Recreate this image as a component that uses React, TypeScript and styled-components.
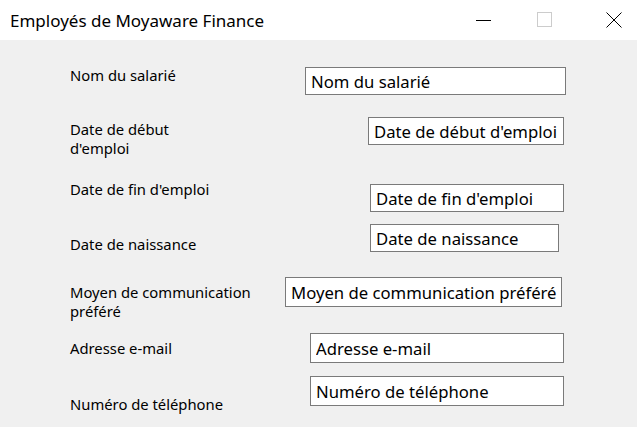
import React from "react";
import styled, { createGlobalStyle } from "styled-components";

const Global = createGlobalStyle`
  html, body { margin: 0; padding: 0; background: #f0f0f0; }
  body { font-family: "Noto Sans", "Open Sans", sans-serif; color: #000; }
`;

const Window = styled.div`
  width: 637px;
  height: 427px;
  display: flex;
  flex-direction: column;
  background: #f0f0f0;
  overflow: hidden;
`;

const TitleBar = styled.div`
  height: 40px;
  flex: none;
  background: #ffffff;
  display: flex;
  align-items: center;
  padding: 0 15px 0 10px;
`;

const Title = styled.div`
  flex: 1;
  font-size: 17px;
  color: #000;
  white-space: nowrap;
`;

const Controls = styled.div`
  display: flex;
  align-items: center;
  height: 100%;
`;

const ControlIcon = styled.svg<{ $gap: number }>`
  display: block;
  margin-left: ${(p) => p.$gap}px;
  width: 16px;
  height: 16px;
`;

const Form = styled.div`
  flex: 1;
  padding: 26px 0 0 70px;
  display: flex;
  flex-direction: column;
`;

const Row = styled.div<{ $h: number }>`
  height: ${(p) => p.$h}px;
  flex: none;
  display: grid;
  grid-template-columns: 215px 1fr;
  align-items: start;
`;

const Label = styled.div<{ $top: number; $max: number }>`
  margin-top: ${(p) => p.$top}px;
  max-width: ${(p) => p.$max}px;
  font-size: 14.8px;
  line-height: 19px;
  color: #000;
`;

const TextBox = styled.input<{ $left: number; $top: number; $w: number; $hh: number }>`
  margin: ${(p) => p.$top}px 0 0 ${(p) => p.$left}px;
  width: ${(p) => p.$w}px;
  height: ${(p) => p.$hh}px;
  box-sizing: border-box;
  border: 1px solid #7a7a7a;
  background: #ffffff;
  padding: 0 0 0 5px;
  font-family: "Noto Sans", "Open Sans", sans-serif;
  font-size: 16.7px;
  color: #000;
  outline: none;
`;

type Field = {
  label: string;
  h: number;
  lTop: number;
  lMax: number;
  bLeft: number;
  bTop: number;
  bW: number;
  bH: number;
};

const fields: Field[] = [
  { label: "Nom du salarié", h: 51, lTop: 0, lMax: 200, bLeft: 20, bTop: 1, bW: 261, bH: 28 },
  { label: "Date de début d'emploi", h: 63, lTop: 3, lMax: 125, bLeft: 83, bTop: 0, bW: 196, bH: 28 },
  { label: "Date de fin d'emploi", h: 44, lTop: 0, lMax: 200, bLeft: 85, bTop: 4, bW: 194, bH: 28 },
  { label: "Date de naissance", h: 53, lTop: 11, lMax: 200, bLeft: 85, bTop: 0, bW: 189, bH: 28 },
  { label: "Moyen de communication préféré", h: 56, lTop: 6, lMax: 190, bLeft: 0, bTop: 0, bW: 277, bH: 30 },
  { label: "Adresse e-mail", h: 43, lTop: 6, lMax: 200, bLeft: 25, bTop: 0, bW: 254, bH: 30 },
  { label: "Numéro de téléphone", h: 50, lTop: 19, lMax: 200, bLeft: 25, bTop: 0, bW: 254, bH: 30 },
];

export default function App() {
  return (
    <Window>
      <Global />
      <TitleBar>
        <Title>Employés de Moyaware Finance</Title>
        <Controls>
          <ControlIcon $gap={0} viewBox="0 0 16 16">
            <line x1="0" y1="8.5" x2="15" y2="8.5" stroke="#000" strokeWidth="1" />
          </ControlIcon>
          <ControlIcon $gap={45} viewBox="0 0 16 16">
            <rect x="0.5" y="0.5" width="14" height="14" fill="none" stroke="#cccccc" strokeWidth="1" />
          </ControlIcon>
          <ControlIcon $gap={53} viewBox="0 0 16 16">
            <path d="M0.5 0.5 L15.5 15.5 M15.5 0.5 L0.5 15.5" stroke="#000" strokeWidth="1" fill="none" />
          </ControlIcon>
        </Controls>
      </TitleBar>
      <Form>
        {fields.map((f) => (
          <Row key={f.label} $h={f.h}>
            <Label $top={f.lTop} $max={f.lMax}>{f.label}</Label>
            <TextBox
              readOnly
              value={f.label}
              $left={f.bLeft}
              $top={f.bTop}
              $w={f.bW}
              $hh={f.bH}
            />
          </Row>
        ))}
      </Form>
    </Window>
  );
}
